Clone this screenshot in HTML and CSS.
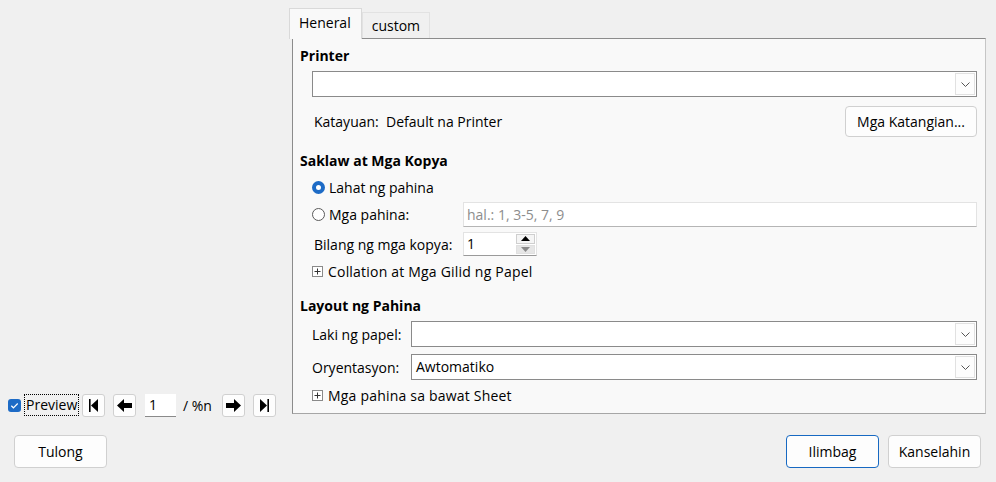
FILE: index.html
```html
<!DOCTYPE html>
<html>
<head>
<meta charset="utf-8">
<link rel="stylesheet" href="styles.css">
</head>
<body>
<div class="dialog">
  <div class="top">
    <div class="left">
      <div class="preview-row">
        <span class="check"><svg width="13" height="13" viewBox="0 0 13 13"><rect x="0" y="0" width="13" height="13" rx="3" fill="#1d6bc6"/><path d="M3.3 6.8 L5.4 8.8 L9.7 4.5" fill="none" stroke="#fff" stroke-width="1.2"/></svg></span>
        <span class="focus-label">Preview</span>
        <span class="nav-btn"><svg width="13" height="15" viewBox="0 0 13 15"><rect x="2" y="1" width="1.6" height="13" fill="#000"/><path d="M11 1 L4 7.5 L11 14 Z" fill="#000"/></svg></span>
        <span class="nav-btn"><svg width="17" height="15" viewBox="0 0 17 15"><path d="M1 7.5 L8 1 L8 5 L16 5 L16 10 L8 10 L8 14 Z" fill="#000"/></svg></span>
        <span class="page-input">1</span>
        <span class="page-total">/ %n</span>
        <span class="nav-btn"><svg width="17" height="15" viewBox="0 0 17 15"><path d="M16 7.5 L9 1 L9 5 L1 5 L1 10 L9 10 L9 14 Z" fill="#000"/></svg></span>
        <span class="nav-btn"><svg width="13" height="15" viewBox="0 0 13 15"><path d="M2 1 L9 7.5 L2 14 Z" fill="#000"/><rect x="9.4" y="1" width="1.6" height="13" fill="#000"/></svg></span>
      </div>
    </div>
    <div class="right">
      <div class="tabs">
        <div class="tab active">Heneral</div>
        <div class="tab">custom</div>
      </div>
      <div class="panel">
        <div class="heading">Printer</div>
        <div class="combo wide"><span class="combo-text"></span><span class="drop"><svg width="9" height="5" viewBox="0 0 9 5"><path d="M0.5 0.5 L4.5 4.5 L8.5 0.5" fill="none" stroke="#555" stroke-width="1"/></svg></span></div>
        <div class="row status-row">
          <span class="status">Katayuan:&nbsp; Default na Printer</span>
          <span class="btn props">Mga Katangian...</span>
        </div>
        <div class="heading h2">Saklaw at Mga Kopya</div>
        <div class="row radio-row">
          <span class="radio on"></span><span>Lahat ng pahina</span>
        </div>
        <div class="row pages-row">
          <span class="radio"></span><span class="pages-label">Mga pahina:</span>
          <span class="text-input disabled">hal.: 1, 3-5, 7, 9</span>
        </div>
        <div class="row copies-row">
          <span class="copies-label">Bilang ng mga kopya:</span>
          <span class="spin"><span class="spin-val">1</span><span class="spin-btns"><span class="up"><svg width="9" height="5" viewBox="0 0 9 5"><path d="M0 5 L4.5 0 L9 5 Z" fill="#000"/></svg></span><span class="down"><svg width="9" height="5" viewBox="0 0 9 5"><path d="M0 0 L4.5 5 L9 0 Z" fill="#8a8a8a"/></svg></span></span></span>
        </div>
        <div class="row expander">
          <span class="plus"><svg width="11" height="11" viewBox="0 0 11 11"><rect x="0.5" y="0.5" width="10" height="10" fill="#fff" stroke="#8a8a8a"/><path d="M2.5 5.5 H8.5 M5.5 2.5 V8.5" stroke="#333" stroke-width="1"/></svg></span>
          <span class="exp-text">Collation at Mga Gilid ng Papel</span>
        </div>
        <div class="heading h3">Layout ng Pahina</div>
        <div class="row field-row">
          <span class="field-label">Laki ng papel:</span>
          <div class="combo"><span class="combo-text"></span><span class="drop"><svg width="9" height="5" viewBox="0 0 9 5"><path d="M0.5 0.5 L4.5 4.5 L8.5 0.5" fill="none" stroke="#555" stroke-width="1"/></svg></span></div>
        </div>
        <div class="row field-row orient">
          <span class="field-label">Oryentasyon:</span>
          <div class="combo"><span class="combo-text">Awtomatiko</span><span class="drop"><svg width="9" height="5" viewBox="0 0 9 5"><path d="M0.5 0.5 L4.5 4.5 L8.5 0.5" fill="none" stroke="#555" stroke-width="1"/></svg></span></div>
        </div>
        <div class="row expander last">
          <span class="plus"><svg width="11" height="11" viewBox="0 0 11 11"><rect x="0.5" y="0.5" width="10" height="10" fill="#fff" stroke="#8a8a8a"/><path d="M2.5 5.5 H8.5 M5.5 2.5 V8.5" stroke="#333" stroke-width="1"/></svg></span>
          <span class="exp-text">Mga pahina sa bawat Sheet</span>
        </div>
      </div>
    </div>
  </div>
  <div class="bottom">
    <span class="btn big">Tulong</span>
    <span class="spacer"></span>
    <span class="btn big default">Ilimbag</span>
    <span class="btn big">Kanselahin</span>
  </div>
</div>
</body>
</html>
```

FILE: styles.css
```css
* { box-sizing: border-box; }
html, body { margin: 0; padding: 0; }
body {
  width: 996px;
  height: 482px;
  background: #f0f0f0;
  font-family: "Open Sans", "Noto Sans", sans-serif;
  font-size: 14px;
  color: #000;
  overflow: hidden;
}
.dialog { display: flex; flex-direction: column; height: 482px; }
.top { display: flex; padding: 8px 10px 0 8px; }
.left { width: 284px; display: flex; flex-direction: column; justify-content: flex-end; }
.right { flex: 1; display: flex; flex-direction: column; }

.preview-row { display: flex; align-items: center; height: 24px; margin-bottom: -3px; }
.check { width: 13px; height: 13px; display: flex; }
.focus-label { margin-left: 3px; padding: 0 1px; height: 22px; line-height: 20px; border: 1px dotted #000; width: 55px; }
.nav-btn {
  width: 23px; height: 23px; background: #fdfdfd; border: 1px solid #d0d0d0; border-radius: 3px;
  display: flex; align-items: center; justify-content: center; margin-left: 3px;
}
.nav-btn + .nav-btn { margin-left: 8px; }
.page-input {
  width: 31px; height: 23px; background: #fff; border-bottom: 1px solid #8a8a8a;
  margin-left: 9px; padding-left: 4px; line-height: 22px;
}
.page-total { margin-left: 7px; width: 36px; }

.tabs { display: flex; align-items: flex-end; height: 30px; margin-left: -3px; position: relative; z-index: 1; }
.tab {
  height: 26px; padding: 0 9px; border: 1px solid #e2e2e2; border-bottom: none; background: #f0f0f0;
  line-height: 26px;
}
.tab.active { height: 31px; margin-bottom: -1px; background: #f9f9f9; border-color: #d9d9d9; padding: 0 10px 0 9px; line-height: 28px; }

.panel {
  background: #f9f9f9; border: 1px solid #8c8c8c; border-right-color: #c6c6c6; border-bottom-color: #a6a6a6;
  padding: 6px 8px 6px 7px; height: 376px;
}
.heading { font-weight: 700; height: 22px; line-height: 22px; }
.h2 { margin-top: 13px; }
.h3 { margin-top: 13px; }
.row { display: flex; align-items: center; margin-left: 12px; }

.combo {
  flex: 1; display: flex; height: 26px; background: #fff; border: 1px solid #8a8a8a;
}
.combo.wide { margin: 4px 0 0 12px; }
.combo-text { flex: 1; padding-left: 4px; line-height: 24px; }
.drop {
  width: 20px; margin: 1px; border: 1px solid #e1e1e1; background: #fdfdfd;
  display: flex; align-items: center; justify-content: center;
}

.status-row { height: 31px; margin-top: 9px; justify-content: space-between; padding-left: 2px; }
.btn {
  background: #fdfdfd; border: 1px solid #d0d0d0; border-radius: 4px;
  display: flex; align-items: center; justify-content: center;
}
.props { width: 132px; height: 31px; }

.radio-row { height: 22px; margin-top: 4px; }
.radio { width: 13px; height: 13px; border-radius: 50%; border: 1px solid #5a5a5a; background: #fff; margin-right: 4px; }
.radio.on { border: 4px solid #1d6bc6; }

.pages-row { height: 25px; margin-top: 4px; }
.pages-label { width: 134px; }
.text-input {
  flex: 1; height: 25px; background: #fff; border: 1px solid #e3e3e3; border-bottom-color: #b5b5b5;
  padding-left: 3px; line-height: 23px;
}
.disabled { color: #8d8d8d; }

.copies-row { height: 24px; margin-top: 5px; padding-left: 2px; }
.copies-label { width: 149px; }
.spin { width: 74px; height: 24px; display: flex; background: #fff; border: 1px solid #e3e3e3; border-bottom-color: #9a9a9a; }
.spin-val { flex: 1; padding-left: 3px; line-height: 22px; }
.spin-btns { width: 20px; display: flex; flex-direction: column; padding: 1px 1px 1px 0; gap: 1px; }
.up, .down { flex: 1; display: flex; align-items: center; justify-content: center; border: 1px solid #cfcfcf; background: #f5f5f5; }
.down { background: #e6e6e6; border-color: #e0e0e0; }

.expander { height: 22px; margin-top: 4px; margin-left: 12px; }
.plus { width: 11px; height: 11px; display: flex; margin-right: 5px; }
.exp-text { letter-spacing: 0.2px; }

.field-row { height: 26px; margin-top: 4px; }
.field-row.orient { margin-top: 7px; }
.field-label { width: 99px; }

.bottom { display: flex; padding: 21px 15px 0 14px; gap: 9px; }
.spacer { flex: 1; }
.big { width: 93px; height: 33px; }
.default { border-color: #1769c2; }
```
